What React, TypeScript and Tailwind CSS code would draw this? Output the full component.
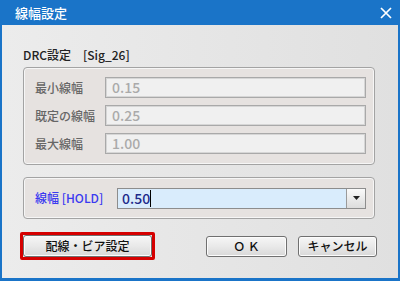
import React from "react";

const font = { fontFamily: '"Noto Sans CJK JP", "Noto Sans", sans-serif' };

function DisabledRow({ label, value }: { label: string; value: string }) {
  return (
    <div className="flex items-center h-[21px]">
      <span className="w-[70px] text-[12px] font-medium text-[#666] leading-none">{label}</span>
      <div className="flex-1 h-[21px] bg-[#f0f0f0] border border-[#a9a9a9] shadow-[inset_0_0_0_1px_#d6d6d6] flex items-center pl-[6px] text-[14px] font-medium text-[#aaa]">
        {value}
      </div>
    </div>
  );
}

function Btn({ children, className = "" }: { children: React.ReactNode; className?: string }) {
  return (
    <div
      className={`h-[21px] rounded-[3px] border border-[#707070] bg-gradient-to-b from-[#f6f6f6] via-[#e9e9e9] to-[#d8d8d8] shadow-[inset_0_0_0_1px_#fcfcfc] flex items-center justify-center text-[12px] font-medium text-[#111] ${className}`}
    >
      {children}
    </div>
  );
}

export default function App() {
  return (
    <div className="w-[400px] h-[281px] bg-[#1a74c8] flex flex-col" style={font}>
      {/* title bar */}
      <div className="h-[25px] flex items-center justify-between pl-[15px] pr-[8px] text-white">
        <span className="text-[13px] font-medium leading-none">線幅設定</span>
        <svg width="12" height="12" viewBox="0 0 12 12">
          <path d="M1 1 L11 11 M11 1 L1 11" stroke="white" strokeWidth="1.7" />
        </svg>
      </div>

      {/* body */}
      <div className="flex-1 mx-[2px] mb-[3px] bg-gradient-to-r from-[#ececec] to-[#e0e0e0] px-[21px] pt-[24px] flex flex-col">
        <div className="text-[12px] font-medium leading-none text-[#222] h-[12px] mb-[6px]">DRC設定　[Sig_26]</div>

        <div className="w-[352px] h-[98px] rounded-[4px] border border-[#a3a3a3] bg-[#e6e2e0] shadow-[inset_0_0_0_1px_#f6f6f6] pl-[11px] pr-[8px] pt-[9px] flex flex-col gap-[7px]">
          <DisabledRow label="最小線幅" value="0.15" />
          <DisabledRow label="既定の線幅" value="0.25" />
          <DisabledRow label="最大線幅" value="1.00" />
        </div>

        <div className="mt-[12px] w-[352px] h-[42px] rounded-[4px] border border-[#a3a3a3] bg-[#e6e2e0] shadow-[inset_0_0_0_1px_#f6f6f6] pl-[11px] pr-[8px] flex items-center">
          <span className="w-[82px] text-[12px] font-medium text-[#3a3af0] leading-none">線幅 [HOLD]</span>
          <div className="flex-1 h-[21px] bg-[#d9ecfc] border border-[#8d8d8d] flex items-center">
            <span className="pl-[4px] text-[14px] font-medium text-[#1e2a8a] leading-none">0.50</span>
            <span className="w-[1px] h-[17px] bg-black" />
            <div className="ml-auto w-[19px] h-[19px] border-l border-[#9a9a9a] bg-gradient-to-b from-[#fafafa] to-[#dcdcdc] flex items-center justify-center">
              <svg width="7" height="4" viewBox="0 0 7 4">
                <path d="M0 0 H7 L3.5 4 Z" fill="#222" />
              </svg>
            </div>
          </div>
        </div>

        <div className="mt-[13px] flex items-center">
          <div className="-ml-[3px] border-[3px] border-[#d50000] rounded-[2px] p-0">
            <Btn className="w-[129px] h-[22px]">配線・ビア設定</Btn>
          </div>
          <Btn className="ml-auto w-[81px]">Ｏ Ｋ</Btn>
          <Btn className="ml-[11px] w-[79px]">キャンセル</Btn>
        </div>
      </div>
    </div>
  );
}
